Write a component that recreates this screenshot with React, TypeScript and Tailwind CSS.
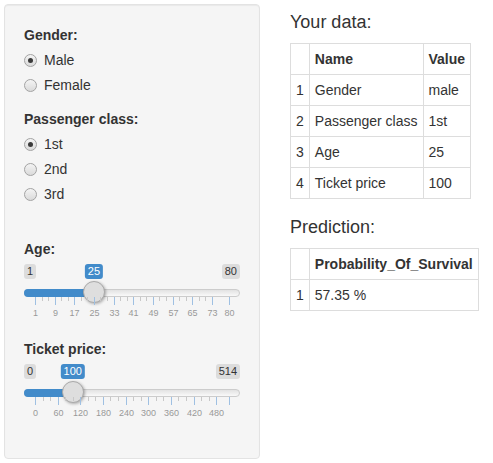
import React from 'react'

const FONT = { fontFamily: '"Liberation Sans", Arial, Helvetica, sans-serif' }

// grid inside the slider: handle is 22px, so ticks run from 11px to 205px
const GRID_LEFT = 11
const GRID_WIDTH = 194

interface SliderProps {
  min: number
  max: number
  value: number
  ticks: number[]
  hideLastLabel?: boolean
}

function Slider({ min, max, value, ticks, hideLastLabel }: SliderProps) {
  const pos = (v: number) => GRID_LEFT + ((v - min) / (max - min)) * GRID_WIDTH
  const step = ticks[1] - ticks[0]
  const minors: number[] = []
  for (let i = 1; i < ticks.length; i++) {
    if (ticks[i] - ticks[i - 1] !== step) continue
    minors.push(ticks[i - 1] + step / 3, ticks[i - 1] + (2 * step) / 3)
  }

  return (
    <div className="relative h-[75px]">
      {/* min / max / value labels */}
      <span className="absolute left-0 top-0 rounded-[3px] bg-[#dcdcdc] px-[3px] py-px text-[11px] leading-[13px] text-[#333]">
        {min}
      </span>
      <span className="absolute right-0 top-0 rounded-[3px] bg-[#dcdcdc] px-[3px] py-px text-[11px] leading-[13px] text-[#333]">
        {max}
      </span>
      <span
        className="absolute top-0 -translate-x-1/2 rounded-[3px] bg-[#428bca] px-[3px] py-px text-[11px] leading-[13px] text-white"
        style={{ left: pos(value) }}
      >
        {value}
      </span>

      {/* track */}
      <div className="absolute left-0 right-0 top-[25px] h-[8px] rounded-full border border-[#ccc] bg-linear-to-b from-[#e2e2e2] to-[#f9f9f9]" />
      <div
        className="absolute left-0 top-[25px] h-[8px] rounded-l-full bg-[#428bca]"
        style={{ width: pos(value) }}
      />
      <div
        className="absolute top-[17px] h-[22px] w-[22px] rounded-full border border-[#aaa] bg-[#dedede] shadow-[1px_1px_3px_rgba(0,0,0,0.3)]"
        style={{ left: pos(value) - 11 }}
      />

      {/* grid */}
      {minors.map((v) => (
        <div
          key={'m' + v}
          className="absolute top-[33px] h-[4px] w-px bg-[#c8c8c8]"
          style={{ left: Math.round(pos(v)) }}
        />
      ))}
      {ticks.map((v) => (
        <div
          key={'t' + v}
          className="absolute top-[33px] h-[8px] w-px bg-[#9fc0e2]"
          style={{ left: Math.round(pos(v)) }}
        />
      ))}
      {ticks.map((v, i) =>
        hideLastLabel && i === ticks.length - 1 ? null : (
          <span
            key={'l' + v}
            className="absolute top-[44px] -translate-x-1/2 text-[9px] leading-[11px] text-[#999]"
            style={{ left: Math.round(pos(v)) + 0.5 }}
          >
            {v}
          </span>
        )
      )}
    </div>
  )
}

function Radio({ label, checked }: { label: string; checked?: boolean }) {
  return (
    <div className="flex h-5 items-center">
      <span className="flex h-[13px] w-[13px] items-center justify-center rounded-full border border-[#a3a3a3] bg-linear-to-b from-[#f4f4f4] to-[#dadada]">
        {checked && <span className="h-[5px] w-[5px] rounded-full bg-[#3a3a3a]" />}
      </span>
      <span className="ml-[7px]">{label}</span>
    </div>
  )
}

function Label({ children }: { children: React.ReactNode }) {
  return <div className="h-5 font-bold">{children}</div>
}

const yourData = [
  ['Gender', 'male'],
  ['Passenger class', '1st'],
  ['Age', '25'],
  ['Ticket price', '100'],
]

const cell = 'border border-[#ddd] px-[5px] py-[5px] text-left align-top'

export default function App() {
  const ageTicks = [1, 9, 17, 25, 33, 41, 49, 57, 65, 73, 80]
  const priceTicks = [0, 60, 120, 180, 240, 300, 360, 420, 480, 514]

  return (
    <div className="flex px-[4px] pt-[4px] text-[14px] leading-5 text-[#333]" style={FONT}>
      {/* Sidebar */}
      <div className="w-[256px] shrink-0 rounded-[4px] border border-[#e3e3e3] bg-[#f5f5f5] px-[19px] pb-[19px] pt-[20px] shadow-[inset_0_1px_1px_rgba(0,0,0,0.05)]">
        <Label>Gender:</Label>
        <div className="mt-[5px] flex flex-col gap-[5px]">
          <Radio label="Male" checked />
          <Radio label="Female" />
        </div>

        <div className="mt-[14px]">
          <Label>Passenger class:</Label>
        </div>
        <div className="mt-[5px] flex flex-col gap-[5px]">
          <Radio label="1st" checked />
          <Radio label="2nd" />
          <Radio label="3rd" />
        </div>

        <div className="mt-[35px]">
          <Label>Age:</Label>
        </div>
        <div className="mt-[5px]">
          <Slider min={1} max={80} value={25} ticks={ageTicks} />
        </div>

        <Label>Ticket price:</Label>
        <div className="mt-[5px]">
          <Slider min={0} max={514} value={100} ticks={priceTicks} hideLastLabel />
        </div>
      </div>

      {/* Main */}
      <div className="ml-[30px] pt-[8px]">
        <h4 className="text-[18px] leading-[20px]">Your data:</h4>
        <table className="mt-[11px] border-collapse">
          <thead>
            <tr>
              <th className={cell}></th>
              <th className={cell + ' font-bold'}>Name</th>
              <th className={cell + ' font-bold'}>Value</th>
            </tr>
          </thead>
          <tbody>
            {yourData.map(([name, value], i) => (
              <tr key={name}>
                <td className={cell}>{i + 1}</td>
                <td className={cell}>{name}</td>
                <td className={cell}>{value}</td>
              </tr>
            ))}
          </tbody>
        </table>

        <h4 className="mt-[18px] text-[18px] leading-[20px]">Prediction:</h4>
        <table className="mt-[11px] border-collapse">
          <thead>
            <tr>
              <th className={cell}></th>
              <th className={cell + ' font-bold'}>Probability_Of_Survival</th>
            </tr>
          </thead>
          <tbody>
            <tr>
              <td className={cell}>1</td>
              <td className={cell}>57.35 %</td>
            </tr>
          </tbody>
        </table>
      </div>
    </div>
  )
}
